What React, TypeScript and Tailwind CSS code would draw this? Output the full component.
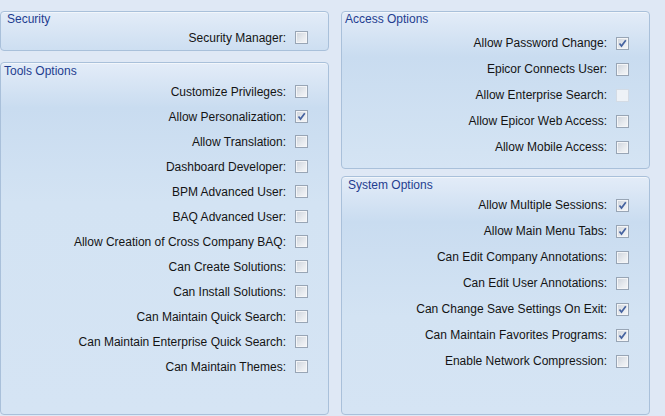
import React from 'react'

type Opt = { label: string; checked?: boolean; disabled?: boolean }

const security: Opt[] = [{ label: 'Security Manager:' }]

const tools: Opt[] = [
  { label: 'Customize Privileges:' },
  { label: 'Allow Personalization:', checked: true },
  { label: 'Allow Translation:' },
  { label: 'Dashboard Developer:' },
  { label: 'BPM Advanced User:' },
  { label: 'BAQ Advanced User:' },
  { label: 'Allow Creation of Cross Company BAQ:' },
  { label: 'Can Create Solutions:' },
  { label: 'Can Install Solutions:' },
  { label: 'Can Maintain Quick Search:' },
  { label: 'Can Maintain Enterprise Quick Search:' },
  { label: 'Can Maintain Themes:' },
]

const access: Opt[] = [
  { label: 'Allow Password Change:', checked: true },
  { label: 'Epicor Connects User:' },
  { label: 'Allow Enterprise Search:', disabled: true },
  { label: 'Allow Epicor Web Access:' },
  { label: 'Allow Mobile Access:' },
]

const system: Opt[] = [
  { label: 'Allow Multiple Sessions:', checked: true },
  { label: 'Allow Main Menu Tabs:', checked: true },
  { label: 'Can Edit Company Annotations:' },
  { label: 'Can Edit User Annotations:' },
  { label: 'Can Change Save Settings On Exit:', checked: true },
  { label: 'Can Maintain Favorites Programs:', checked: true },
  { label: 'Enable Network Compression:' },
]

function CheckBox({ checked, disabled }: { checked?: boolean; disabled?: boolean }) {
  return (
    <div
      className={
        disabled
          ? 'flex h-[13px] w-[13px] items-center justify-center border border-[#d3dbe5] bg-[#eef2f7]'
          : 'flex h-[13px] w-[13px] items-center justify-center border border-[#98a5b5] bg-[linear-gradient(135deg,#cdd3db_0%,#e8ebef_60%,#f6f7f9_100%)] shadow-[inset_0_0_0_1px_#f4f5f7]'
      }
    >
      {checked && (
        <svg width="9" height="9" viewBox="0 0 9 9">
          <path d="M1.5 4.5 L3.5 7 L7.8 1.2" fill="none" stroke="#4663a0" strokeWidth="1.7" />
        </svg>
      )}
    </div>
  )
}

function Row({ opt, h }: { opt: Opt; h: string }) {
  return (
    <div className={`flex items-center justify-end gap-[9px] pr-[20px] ${h}`}>
      <span className="whitespace-nowrap text-[12px] leading-none text-[#141414]">{opt.label}</span>
      <CheckBox checked={opt.checked} disabled={opt.disabled} />
    </div>
  )
}

function Panel({
  title,
  opts,
  className,
  titleClass,
  rowsClass,
  rowH,
}: {
  title: string
  opts: Opt[]
  className: string
  titleClass: string
  rowsClass: string
  rowH: string
}) {
  return (
    <div
      className={`flex flex-col rounded-[4px] border border-[#a9c0da] bg-[linear-gradient(180deg,#e3ecf8_0px,#c9dcf0_45px,#d3e3f3_140px,#d5e4f4_100%)] shadow-[inset_0_1px_0_#f2f6fb] ${className}`}
    >
      <div className={`h-[14px] text-[12px] leading-[14px] text-[#1f3d90] ${titleClass}`}>{title}</div>
      <div className={`flex flex-col ${rowsClass}`}>
        {opts.map((o) => (
          <Row key={o.label} opt={o} h={rowH} />
        ))}
      </div>
    </div>
  )
}

export default function App() {
  return (
    <div
      className="flex h-[416px] w-[665px] gap-[12px] bg-[#dfe8f5] pt-[11px] pb-[1px] pr-[15px]"
      style={{ fontFamily: '"Liberation Sans", Arial, sans-serif' }}
    >
      <div className="flex w-[329px] flex-col gap-[11px]">
        <Panel
          title="Security"
          opts={security}
          className="h-[40px]"
          titleClass="mt-[0px] pl-[6px]"
          rowsClass="-mt-[1px]"
          rowH="h-[25px]"
        />
        <Panel
          title="Tools Options"
          opts={tools}
          className="flex-1"
          titleClass="mt-[1px] pl-[3px]"
          rowsClass="mt-[1px]"
          rowH="h-[25px]"
        />
      </div>
      <div className="flex w-[309px] flex-col gap-[7px]">
        <Panel
          title="Access Options"
          opts={access}
          className="h-[158px]"
          titleClass="mt-[0px] pl-[3px]"
          rowsClass="mt-[4px]"
          rowH="h-[26px]"
        />
        <Panel
          title="System Options"
          opts={system}
          className="flex-1"
          titleClass="mt-[1px] pl-[6px]"
          rowsClass="mt-0"
          rowH="h-[26px]"
        />
      </div>
    </div>
  )
}
